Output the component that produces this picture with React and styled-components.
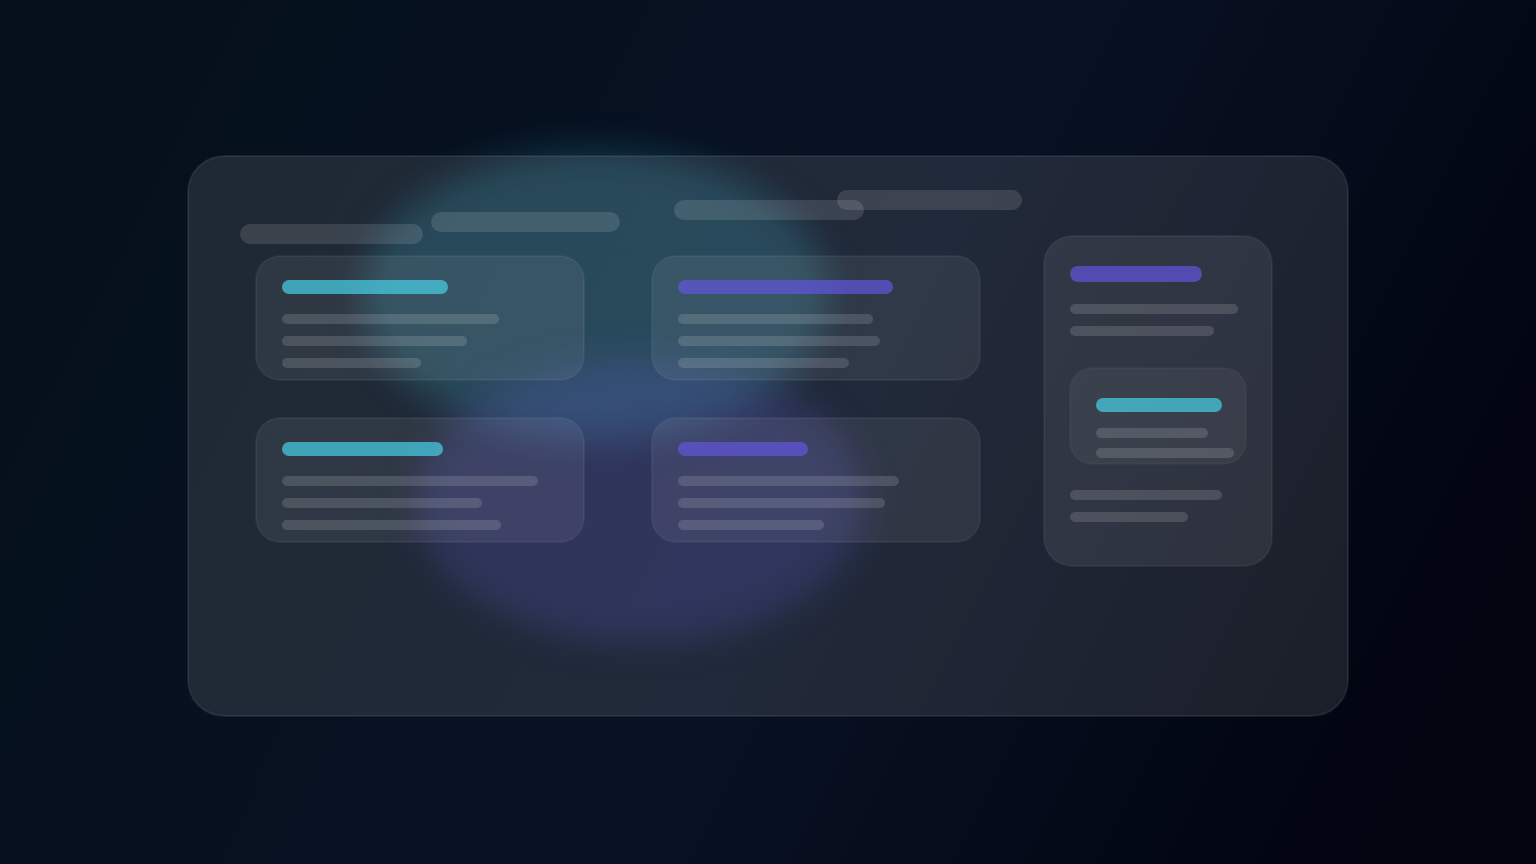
import React from "react";
import styled, { createGlobalStyle } from "styled-components";

const tabs = [
  { width: 183, drop: 34, gap: 0 },
  { width: 189, drop: 22, gap: 8 },
  { width: 190, drop: 10, gap: 54 },
  { width: 185, drop: 0, gap: -27 },
];

const cards = [
  { color: "cyan", title: 166, lines: [217, 185, 139] },
  { color: "violet", title: 215, lines: [195, 202, 171] },
  { color: "cyan", title: 161, lines: [256, 200, 219] },
  { color: "violet", title: 130, lines: [221, 207, 146] },
];

const accents = {
  cyan: "rgba(72, 210, 232, 0.7)",
  violet: "rgba(98, 86, 222, 0.7)",
};

function Lines({ widths, gap = 12 }) {
  return (
    <LineStack $gap={gap}>
      {widths.map((w, i) => (
        <Line key={i} $width={w} />
      ))}
    </LineStack>
  );
}

function App() {
  return (
    <Page>
      <GlobalStyle />
      <CyanGlow />
      <VioletGlow />
      <Panel>
        <Main>
          <Tabs>
            {tabs.map((t, i) => (
              <Tab key={i} $width={t.width} $drop={t.drop} $gap={t.gap} />
            ))}
          </Tabs>
          <CardGrid>
            {cards.map((c, i) => (
              <Card key={i}>
                <Title $width={c.title} $color={c.color} />
                <Lines widths={c.lines} />
              </Card>
            ))}
          </CardGrid>
        </Main>
        <Sidebar>
          <Title $width={132} $color="violet" $large />
          <Lines widths={[168, 144]} />
          <InnerCard>
            <Title $width={126} $color="cyan" />
            <Lines widths={[112, 138]} gap={10} />
          </InnerCard>
          <Lines widths={[152, 118]} />
        </Sidebar>
      </Panel>
    </Page>
  );
}

const GlobalStyle = createGlobalStyle`
  * {
    box-sizing: border-box;
  }
  body {
    margin: 0;
    background: #020510;
  }
`;

const Page = styled.div`
  position: relative;
  min-height: 100vh;
  padding: 156px 188px 148px;
  overflow: hidden;
  background: linear-gradient(117deg, #05101b 0%, #081224 54%, #020511 88%, #02040f 100%);
`;

const Glow = styled.div`
  position: absolute;
  border-radius: 50%;
  filter: blur(18px);
`;

const CyanGlow = styled(Glow)`
  top: 150px;
  left: 362px;
  width: 466px;
  height: 290px;
  background: rgba(56, 200, 232, 0.2);
`;

const VioletGlow = styled(Glow)`
  top: 360px;
  left: 416px;
  width: 448px;
  height: 282px;
  background: rgba(88, 78, 222, 0.21);
`;

const Surface = styled.div`
  border: 1px solid rgba(255, 255, 255, ${(p) => p.$edge || 0.05});
  box-shadow: 0 0 0 1px rgba(255, 255, 255, ${(p) => p.$edge || 0.05});
`;

const Panel = styled(Surface).attrs({ as: "main", $edge: 0.08 })`
  position: relative;
  display: flex;
  align-items: flex-start;
  gap: 22px;
  min-height: 560px;
  padding: 33px 75px 149px 51px;
  border-radius: 36px;
  background: rgba(255, 255, 255, 0.1);
`;

const Main = styled.section`
  flex: 1;
  min-width: 0;
`;

const Tabs = styled.header`
  display: flex;
  align-items: flex-start;
  height: 54px;
`;

const Tab = styled.div`
  flex: none;
  width: ${(p) => p.$width}px;
  height: 20px;
  margin-top: ${(p) => p.$drop}px;
  margin-left: ${(p) => p.$gap}px;
  border-radius: 10px;
  background: rgba(255, 255, 255, 0.12);
`;

const CardGrid = styled.div`
  display: grid;
  grid-template-columns: 1fr 1fr;
  gap: 38px 68px;
  margin-top: 12px;
  padding: 0 42px 0 16px;
`;

const Card = styled(Surface).attrs({ as: "article" })`
  display: flex;
  flex-direction: column;
  gap: 20px;
  min-height: 124px;
  padding: 23px 25px 11px;
  border-radius: 24px;
  background: rgba(255, 255, 255, 0.07);
`;

const Title = styled.div`
  width: ${(p) => p.$width}px;
  height: ${(p) => (p.$large ? 16 : 14)}px;
  border-radius: 8px;
  background: ${(p) => accents[p.$color]};
`;

const LineStack = styled.div`
  display: flex;
  flex-direction: column;
  gap: ${(p) => p.$gap}px;
`;

const Line = styled.div`
  width: ${(p) => p.$width}px;
  height: 10px;
  border-radius: 5px;
  background: rgba(255, 255, 255, 0.14);
`;

const Sidebar = styled(Surface).attrs({ as: "aside" })`
  display: flex;
  flex-direction: column;
  flex: none;
  gap: 22px;
  width: 228px;
  margin-top: 46px;
  padding: 29px 25px 43px;
  border-radius: 28px;
  background: rgba(255, 255, 255, 0.08);
`;

const InnerCard = styled(Surface).attrs({ as: "article", $edge: 0.03 })`
  display: flex;
  flex-direction: column;
  gap: 16px;
  margin: 10px 0 4px;
  padding: 29px 0 5px 25px;
  border-radius: 22px;
  background: rgba(255, 255, 255, 0.05);
`;

export default App;
